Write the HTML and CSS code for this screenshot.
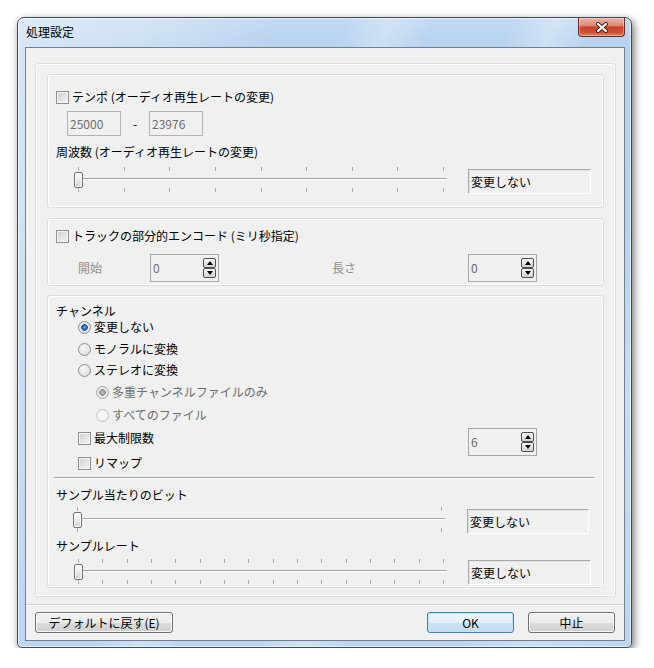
FILE: index.html
```html
<!DOCTYPE html>
<html lang="ja">
<head>
<meta charset="utf-8">
<title>処理設定</title>
<link rel="stylesheet" href="styles.css">
</head>
<body>
<div class="window">
  <div class="titlebar">
    <span class="title">処理設定</span>
    <div class="close">
      <svg width="14" height="11" viewBox="0 0 14 11">
        <path d="M3 2 L11 9 M11 2 L3 9" stroke="#3b1a14" stroke-width="4" stroke-linecap="round" fill="none"/>
        <path d="M3 2 L11 9 M11 2 L3 9" stroke="#ffffff" stroke-width="2.2" stroke-linecap="round" fill="none"/>
      </svg>
    </div>
  </div>
  <div class="client">
    <div class="frame">
      <div class="group g1">
        <div class="line"><span class="cb"></span><span>テンポ (オーディオ再生レートの変更)</span></div>
        <div class="tempo-row"><div class="tbox">25000</div><span class="dash">-</span><div class="tbox">23976</div></div>
        <div class="line label-gap">周波数 (オーディオ再生レートの変更)</div>
        <div class="slider-row first">
          <div class="slider">
            <div class="ticks"><i></i><i></i><i></i><i></i><i></i><i></i><i></i><i></i><i></i></div>
            <div class="track"></div>
            <div class="ticks bottom"><i></i><i></i><i></i><i></i><i></i><i></i><i></i><i></i><i></i></div>
            <span class="thumb"></span>
          </div>
          <div class="static">変更しない</div>
        </div>
      </div>

      <div class="group g2">
        <div class="line"><span class="cb"></span><span>トラックの部分的エンコード (ミリ秒指定)</span></div>
        <div class="range-row">
          <span class="dim start-lbl">開始</span>
          <div class="spin"><span class="val">0</span><span class="btns"><span class="sb up"></span><span class="sb down"></span></span></div>
          <span class="dim len-lbl">長さ</span>
          <div class="spin"><span class="val">0</span><span class="btns"><span class="sb up"></span><span class="sb down"></span></span></div>
        </div>
      </div>

      <div class="group g3">
        <div class="line">チャンネル</div>
        <div class="line opt r1"><span class="rb on"></span><span>変更しない</span></div>
        <div class="line opt r2"><span class="rb"></span><span>モノラルに変換</span></div>
        <div class="line opt r3"><span class="rb"></span><span>ステレオに変換</span></div>
        <div class="line sub r4"><span class="rb on dis"></span><span class="dis-text">多重チャンネルファイルのみ</span></div>
        <div class="line sub r5"><span class="rb dis"></span><span class="dis-text">すべてのファイル</span></div>
        <div class="line opt r6"><span class="cb"></span><span>最大制限数</span>
          <div class="spin max-spin"><span class="val">6</span><span class="btns"><span class="sb up"></span><span class="sb down"></span></span></div>
        </div>
        <div class="line opt r7"><span class="cb"></span><span>リマップ</span></div>
        <div class="sep"></div>
        <div class="line bits-lbl">サンプル当たりのビット</div>
        <div class="slider-row bits">
          <div class="slider">
            <div class="ticks"><i></i><i></i></div>
            <div class="track"></div>
            <div class="ticks bottom"><i></i><i></i></div>
            <span class="thumb"></span>
          </div>
          <div class="static">変更しない</div>
        </div>
        <div class="line rate-lbl">サンプルレート</div>
        <div class="slider-row rate">
          <div class="slider">
            <div class="ticks"><i></i><i></i><i></i><i></i><i></i><i></i><i></i><i></i><i></i><i></i><i></i><i></i><i></i><i></i><i></i><i></i></div>
            <div class="track"></div>
            <div class="ticks bottom"><i></i><i></i><i></i><i></i><i></i><i></i><i></i><i></i><i></i><i></i><i></i><i></i><i></i><i></i><i></i><i></i></div>
            <span class="thumb"></span>
          </div>
          <div class="static">変更しない</div>
        </div>
      </div>
    </div>

    <div class="footer">
      <div class="btn btn-reset">デフォルトに戻す(E)</div>
      <div class="btn btn-ok">OK</div>
      <div class="btn btn-cancel">中止</div>
    </div>
  </div>
</div>
</body>
</html>
```

FILE: styles.css
```css
html, body {
  margin: 0;
  padding: 0;
  background: #ffffff;
}

body {
  font-family: "Noto Sans CJK JP", "Noto Sans", sans-serif;
  font-size: 12px;
  line-height: 16px;
  color: #000;
}

.window {
  box-sizing: border-box;
  width: 615px;
  height: 631px;
  margin: 17px 0 0 17px;
  border: 1px solid #3e4a56;
  border-radius: 7px 7px 5px 5px;
  display: flex;
  flex-direction: column;
  background:
    linear-gradient(112deg,
      rgba(255,255,255,0.45) 0%, rgba(255,255,255,0.25) 18%, rgba(255,255,255,0) 30%,
      rgba(255,255,255,0) 38%, rgba(255,255,255,0.28) 43%, rgba(255,255,255,0) 48%,
      rgba(255,255,255,0) 57%, rgba(255,255,255,0.3) 62%, rgba(255,255,255,0) 67%,
      rgba(255,255,255,0) 80%, rgba(255,255,255,0.2) 88%, rgba(255,255,255,0) 100%),
    linear-gradient(to bottom, #c2daf2 0px, #b6d2ef 30px, #bcd6f1 100%);
  box-shadow: 2px 3px 9px rgba(0,0,0,0.55), inset 0 0 0 1px rgba(255,255,255,0.55);
}

.titlebar {
  box-sizing: border-box;
  height: 29px;
  flex: none;
  display: flex;
  align-items: flex-start;
  justify-content: space-between;
  padding: 0 6px 0 8px;
}

.title {
  margin-top: 6px;
  color: #000;
}

.close {
  box-sizing: border-box;
  width: 47px;
  height: 19px;
  border: 1px solid #6a2a20;
  border-top: none;
  border-radius: 0 0 4px 4px;
  background: linear-gradient(to bottom, #eab1a4 0%, #df8c79 40%, #c8442c 52%, #cf5238 80%, #e08366 100%);
  box-shadow: inset 0 0 0 1px rgba(255,255,255,0.35);
  display: flex;
  align-items: center;
  justify-content: center;
}

.client {
  box-sizing: border-box;
  height: 594px;
  margin: 0 6px 0 7px;
  border: 1px solid #71808f;
  background: #f0f0f0;
  display: flex;
  flex-direction: column;
}

.frame {
  box-sizing: border-box;
  height: 534px;
  margin: 15px 8px 0 9px;
  padding: 10px 11px 0 11px;
  border: 1px solid #d5dfe5;
  border-radius: 3px;
  box-shadow: inset 0 0 0 1px #ffffff;
  display: flex;
  flex-direction: column;
}

.group {
  box-sizing: border-box;
  border: 1px solid #d5dfe5;
  border-radius: 3px;
  box-shadow: inset 0 0 0 1px #ffffff;
  padding-left: 8px;
  display: flex;
  flex-direction: column;
  flex: none;
}

.g1 { height: 134px; padding-top: 14px; }
.g2 { height: 68px; margin-top: 10px; padding-top: 9px; }
.g3 { height: 293px; margin-top: 9px; padding-top: 7px; }

.line {
  height: 16px;
  display: flex;
  align-items: center;
  white-space: nowrap;
}

.cb {
  box-sizing: border-box;
  width: 13px;
  height: 13px;
  flex: none;
  margin-right: 3px;
  border: 1px solid #8e8f8f;
  background: linear-gradient(135deg, #cdcdcd 0%, #e6e6e6 60%, #f5f5f5 100%);
  box-shadow: inset 0 0 0 1px #f6f6f6;
}

.rb {
  box-sizing: border-box;
  width: 13px;
  height: 13px;
  flex: none;
  margin-right: 3px;
  border: 1px solid #8e8f8f;
  border-radius: 50%;
  background: radial-gradient(circle at 40% 35%, #f7f7f7 0%, #e4e4e4 60%, #d2d2d2 100%);
}

.rb.on {
  background: radial-gradient(circle at 50% 50%, #8cc4f2 0px, #2b6fbf 1.6px, #1b4f8f 3px, #e9e9e9 3.6px, #dcdcdc 100%);
}

.rb.dis {
  border-color: #c4c4c4;
  background: radial-gradient(circle at 40% 35%, #f7f7f7 0%, #efefef 100%);
}

.rb.on.dis {
  border-color: #a8a8a8;
  background: radial-gradient(circle at 50% 50%, #c8c8c8 0px, #9a9a9a 2.4px, #8c8c8c 3px, #e9e9e9 3.6px, #e2e2e2 100%);
}

.dis-text { color: #6d6d6d; }

.tempo-row {
  display: flex;
  align-items: center;
  margin-top: 6px;
  margin-left: 11px;
}

.tbox {
  box-sizing: border-box;
  width: 54px;
  height: 25px;
  border: 1px solid #b2b2b2;
  padding-left: 2px;
  line-height: 23px;
  color: #6d6d6d;
}

.dash {
  width: 28px;
  text-align: center;
}

.label-gap { margin-top: 8px; }

.slider-row {
  display: flex;
  align-items: flex-start;
  margin-left: 16px;
}

.slider-row.first { margin-top: 7px; }

.slider {
  position: relative;
  width: 378px;
  height: 25px;
  flex: none;
}

.ticks {
  height: 4px;
  display: flex;
  justify-content: space-between;
  padding: 0 6px 0 6px;
}

.ticks i {
  width: 1px;
  height: 4px;
  background: #ababab;
}

.ticks.bottom { margin-top: 8px; }

.track {
  margin: 7px 3px 0 4px;
  height: 1px;
  background: #a6a6a6;
  border-bottom: 1px solid #ffffff;
}

.thumb {
  position: absolute;
  left: 2px;
  top: 5px;
  box-sizing: border-box;
  width: 9px;
  height: 16px;
  border: 1px solid #747474;
  border-radius: 2px;
  background: linear-gradient(to bottom, #ffffff 0%, #ececec 45%, #d4d4d4 100%);
  box-shadow: inset 0 0 0 1px #fafafa;
}

.static {
  box-sizing: border-box;
  width: 123px;
  height: 25px;
  margin-left: 18px;
  margin-top: 2px;
  border: 1px solid;
  border-color: #a9a9a9 #ffffff #ffffff #a9a9a9;
  box-shadow: inset 1px 1px 0 #e3e3e3;
  padding-left: 2px;
  line-height: 23px;
  white-space: nowrap;
}

.range-row {
  display: flex;
  align-items: center;
  margin-top: 10px;
  height: 28px;
}

.dim { color: #8f8f8f; }
.start-lbl { margin-left: 22px; width: 72px; }
.len-lbl { margin-left: 113px; width: 136px; }

.spin {
  box-sizing: border-box;
  width: 69px;
  height: 28px;
  flex: none;
  border: 1px solid #a6a6a6;
  display: flex;
  align-items: center;
  padding: 0 2px 0 2px;
  color: #6d6d6d;
}

.spin .val { flex: 1; }

.btns {
  display: flex;
  flex-direction: column;
}

.sb {
  box-sizing: border-box;
  width: 13px;
  height: 10px;
  border: 1px solid #4e4e4e;
  border-radius: 2px;
  background: linear-gradient(to bottom, #fbfbfb 0%, #e6e6e6 50%, #d2d2d2 100%);
  display: flex;
  align-items: center;
  justify-content: center;
}

.sb::after {
  content: "";
  width: 0;
  height: 0;
  border-left: 3.5px solid transparent;
  border-right: 3.5px solid transparent;
}

.sb.up::after { border-bottom: 4px solid #000; }
.sb.down::after { border-top: 4px solid #000; }

.opt { margin-left: 22px; }
.sub { margin-left: 40px; }

.r1 { margin-top: 0; }
.r2 { margin-top: 6px; }
.r3 { margin-top: 5px; }
.r4 { margin-top: 6px; }
.r5 { margin-top: 7px; }
.r6 { margin-top: 7px; align-items: center; }
.r7 { margin-top: 9px; }

.max-spin {
  align-self: flex-start;
  margin-top: -2px;
  margin-left: auto;
  margin-right: 66px;
}

.sep {
  margin: 6px 0 0 -2px;
  width: 540px;
  height: 1px;
  background: #a0a0a0;
  border-bottom: 1px solid #ffffff;
}

.bits-lbl { margin-top: 8px; }
.slider-row.bits { margin-top: 4px; margin-left: 15px; }
.slider-row.bits .slider { width: 377px; }
.slider-row.bits .static { width: 122px; margin-left: 19px; }
.rate-lbl { margin-top: 4px; }
.slider-row.rate { margin-top: 5px; }
.slider-row.rate .static { margin-top: 1px; }

.footer {
  margin-top: 7px;
  border-top: 1px solid #d2d2d2;
  box-shadow: inset 0 1px 0 #ffffff;
  padding: 7px 9px 0 9px;
  display: flex;
  align-items: flex-start;
  flex: 1;
}

.btn {
  box-sizing: border-box;
  height: 21px;
  border: 1px solid #707070;
  border-radius: 3px;
  background: linear-gradient(to bottom, #f2f2f2 0%, #ebebeb 50%, #dddddd 51%, #cfcfcf 100%);
  box-shadow: inset 0 0 0 1px rgba(255,255,255,0.8);
  line-height: 19px;
  text-align: center;
  white-space: nowrap;
}

.btn-reset { width: 138px; }

.btn-ok {
  width: 87px;
  margin-left: auto;
  border-color: #3c7fb1;
  background: linear-gradient(to bottom, #edf5fb 0%, #e2eef8 50%, #cde3f3 51%, #c0dcef 100%);
  box-shadow: inset 0 0 0 1px #bfe3f7;
}

.btn-cancel {
  width: 87px;
  margin-left: 14px;
}
```
